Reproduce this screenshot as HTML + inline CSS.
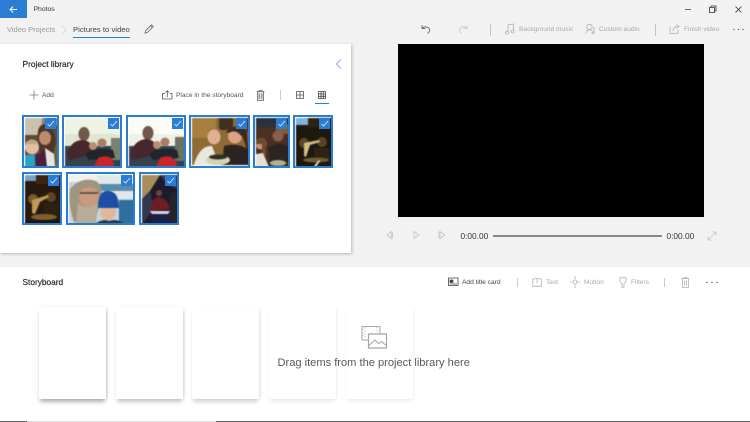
<!DOCTYPE html>
<html lang="en">
<head>
<meta charset="utf-8">
<title>Photos</title>
<style>
html,body{margin:0;padding:0}
body{width:750px;height:422px;overflow:hidden;background:#f2f2f2;position:relative;font-family:"Liberation Sans",sans-serif;color:#222}
.a{position:absolute;white-space:nowrap}
.t{font-size:6.6px;line-height:10px;margin-top:.7px}
.g{color:#a8a8a8}
svg{position:absolute;overflow:visible;stroke-width:.8}
.thumb{position:absolute;border:2px solid #2b7cd3;box-sizing:border-box;background:#fff;overflow:hidden}
.thumb>svg{left:1px;top:1px;filter:blur(.6px)}
.chk{position:absolute;top:1px;right:1px;width:11px;height:11px;background:#2b7cd3}
.chk svg{left:0;top:0}
.card{position:absolute;top:307px;width:67px;height:91.500px;background:#fff}
</style>
</head>
<body>
<!-- title bar -->
<div class="a" style="left:0;top:0;width:27px;height:18px;background:#2b7cd3"></div>
<svg style="left:0;top:0" width="27" height="18"><path d="M10 9.500H17M13 6.500L10 9.500L13 12.500" fill="none" stroke="#fff" stroke-width="1"/></svg>
<div class="a" style="left:33.500px;top:5px;font-size:6.800px;line-height:10px;color:#333">Photos</div>
<svg style="left:680px;top:0" width="70" height="18"><path d="M5 9.500H11" stroke="#444" fill="none"/><path d="M29.500 7.500H34.500V12.500H29.500ZM31 7.500V6H36V11H34.500" stroke="#333" fill="none"/><path d="M55.500 6.500L61.500 12.500M61.500 6.500L55.500 12.500" stroke="#333" fill="none"/></svg>

<!-- breadcrumbs -->
<div class="a" style="left:7px;top:24px;font-size:7.500px;line-height:11px;color:#999">Video Projects</div>
<svg style="left:60px;top:24px" width="8" height="12"><path d="M2 1.500L6 6L2 10.500" stroke="#d4d4d4" fill="none"/></svg>
<div class="a" style="left:73px;top:24px;font-size:7.700px;line-height:11px;color:#444">Pictures to video</div>
<div class="a" style="left:73px;top:36.500px;width:57px;height:1px;background:#2b7cd3"></div>
<svg style="left:143px;top:23px" width="12" height="12"><path d="M2 10L2.800 7.500L8.500 1.800L10.300 3.600L4.600 9.300ZM7.500 2.800L9.300 4.600" stroke="#666" fill="none"/></svg>

<!-- top right toolbar -->
<svg style="left:420px;top:23px" width="12" height="12"><path d="M2 2V5.500H5.500M2.300 5.200C4 3.500 7 3.300 8.700 5C10.300 6.700 9.500 9.300 7.500 10.500" stroke="#555" fill="none"/></svg>
<svg style="left:456.500px;top:23px" width="12" height="12"><path d="M10 2V5.500H6.500M9.700 5.200C8 3.500 5 3.300 3.300 5C1.700 6.700 2.500 9.300 4.500 10.500" stroke="#c4c4c4" fill="none"/></svg>
<div class="a" style="left:490px;top:24px;width:1px;height:12px;background:#c4c4c4"></div>
<svg style="left:505px;top:23px" width="10" height="12"><path d="M3 9V2L8.500 1V8" stroke="#b0b0b0" fill="none"/><circle cx="2" cy="9.500" r="1.500" fill="none" stroke="#b0b0b0"/><circle cx="7.500" cy="8.500" r="1.500" fill="none" stroke="#b0b0b0"/></svg>
<div class="a t g" style="left:519px;top:24px">Background music</div>
<svg style="left:585px;top:23px" width="12" height="12"><circle cx="4.500" cy="4" r="2.700" fill="none" stroke="#b0b0b0"/><path d="M.800 10.500C1.300 7.500 3 6.800 4.500 6.800C5.500 6.800 6.300 7 7 7.500M9 4V9.500" stroke="#b0b0b0" fill="none"/><circle cx="8" cy="9.800" r="1" fill="none" stroke="#b0b0b0"/></svg>
<div class="a t g" style="left:599px;top:24px">Custom audio</div>
<div class="a" style="left:655px;top:24px;width:1px;height:12px;background:#c4c4c4"></div>
<svg style="left:669px;top:23px" width="12" height="12"><path d="M1 4V10.500H9V7M4 8C4 5 6 3.500 9 3.500M7.500 1.500L10 3.500L7.500 5.500" stroke="#b0b0b0" fill="none"/></svg>
<div class="a t g" style="left:684px;top:24px">Finish video</div>
<svg style="left:733px;top:28px" width="12" height="3"><circle cx="1" cy="1.500" r=".7" fill="#666"/><circle cx="5.500" cy="1.500" r=".7" fill="#666"/><circle cx="10" cy="1.500" r=".7" fill="#666"/></svg>

<!-- project library panel -->
<div class="a" style="left:0;top:44px;width:351px;height:209px;background:#fff;box-shadow:1px 1px 3px rgba(0,0,0,.25)"></div>
<div class="a" style="left:22.500px;top:59px;font-size:8.400px;line-height:11px;color:#222;-webkit-text-stroke:.15px #222">Project library</div>
<svg style="left:335px;top:58px" width="8" height="12"><path d="M6 1.500L1.500 6L6 10.500" stroke="#5a9bdc" fill="none"/></svg>
<svg style="left:29px;top:90px" width="10" height="10"><path d="M5 .500V9.500M.500 5H9.500" stroke="#777" fill="none"/></svg>
<div class="a t" style="left:42px;top:90px;color:#555">Add</div>
<svg style="left:162px;top:90px" width="11" height="10"><path d="M3 3.500H.500V9H10V3.500H7.500M5.300 7V.800M3.500 2.500L5.300 .800L7 2.500" stroke="#555" fill="none"/></svg>
<div class="a t" style="left:176px;top:90px;color:#555">Place in the storyboard</div>
<svg style="left:256px;top:90px" width="9" height="11"><path d="M.500 1.500H8.500M3 1.500V.500H6V1.500M1.500 1.500V10.500H7.500V1.500" stroke="#666" fill="#e4e4e4"/><path d="M3.200 3.500V8.800M5.800 3.500V8.800" stroke="#666"/></svg>
<div class="a" style="left:280px;top:90px;width:1px;height:10px;background:#c8c8c8"></div>
<svg style="left:296px;top:91px" width="8" height="8"><path d="M.500 .500H7.500V7.500H.500ZM4 .500V7.500M.500 4H7.500" stroke="#555" fill="none"/></svg>
<svg style="left:318px;top:91px" width="8" height="8"><path d="M.500 .500H7.500V7.500H.500ZM3 .500V7.500M5.300 .500V7.500M.500 3H7.500M.500 5.300H7.500" stroke="#444" fill="none"/></svg>
<div class="a" style="left:315px;top:102.500px;width:14px;height:1px;background:#2b7cd3"></div>

<!-- thumbs row 1 -->
<div class="thumb" style="left:22px;top:115px;width:37px;height:53px">
<svg width="33" height="49"><rect width="33" height="49" fill="#5c4c3c"/><rect width="17" height="17" fill="#c9c2ae"/><rect x="17" width="16" height="8" fill="#8a8070"/><rect x="27" y="24" width="6" height="25" fill="#6d5d32"/><path d="M13 24Q11 6 20 6Q29 6 31 26L27 38L15 34Z" fill="#4e3626"/><ellipse cx="20" cy="20" rx="6" ry="7" fill="#c08a6e"/><ellipse cx="7" cy="29" rx="7" ry="7.500" fill="#dfbfa8"/><path d="M0 25Q6 19 13 24L12 26H1Z" fill="#bda87e"/><rect x="0" y="37" width="10" height="12" fill="#2aa3c9"/><path d="M10 38L20 32L22 49H11Z" fill="#4a1f3c"/><path d="M20 30L29 36L30 49H22Z" fill="#e8e4dc"/></svg>
<div class="chk"><svg width="11" height="11"><path d="M2.500 6L4.500 8L9 3" stroke="#e6f0fa" fill="none"/></svg></div></div>

<div class="thumb" style="left:62px;top:115px;width:60px;height:53px">
<svg width="56" height="49"><rect width="56" height="49" fill="#dfe6d2"/><rect y="0" width="56" height="16" fill="#eef3e4"/><rect x="0" y="28" width="56" height="21" fill="#33424c"/><rect x="46" y="20" width="10" height="22" fill="#7c806e"/><ellipse cx="19" cy="16" rx="5.500" ry="7" fill="#705848"/><path d="M2 36Q6 22 18 22Q28 23 30 36L4 42Z" fill="#47262e"/><circle cx="37" cy="25" r="4.500" fill="#a77c68"/><circle cx="28" cy="28" r="4" fill="#b79078"/><path d="M20 36Q32 28 48 32L50 40L24 42Z" fill="#1f252b"/><path d="M29 49L33 40Q42 36 47 41L50 49Z" fill="#c8262a"/></svg>
<div class="chk"><svg width="11" height="11"><path d="M2.500 6L4.500 8L9 3" stroke="#e6f0fa" fill="none"/></svg></div></div>

<div class="thumb" style="left:126px;top:115px;width:60px;height:53px">
<svg width="56" height="49"><rect width="56" height="49" fill="#eef2e4"/><rect y="0" width="56" height="16" fill="#fbfcf6"/><rect x="0" y="28" width="56" height="21" fill="#33424c"/><rect x="46" y="19" width="10" height="24" fill="#6e7262"/><ellipse cx="19" cy="15" rx="5.500" ry="7" fill="#705848"/><path d="M1 36Q6 21 18 21Q28 22 30 36L3 42Z" fill="#47262e"/><circle cx="36" cy="24" r="4.500" fill="#a77c68"/><circle cx="28" cy="27" r="4" fill="#b79078"/><path d="M20 36Q32 28 48 32L50 40L24 42Z" fill="#1f252b"/><path d="M27 49L31 40Q40 36 45 41L49 49Z" fill="#c8262a"/></svg>
<div class="chk"><svg width="11" height="11"><path d="M2.500 6L4.500 8L9 3" stroke="#e6f0fa" fill="none"/></svg></div></div>

<div class="thumb" style="left:189px;top:115px;width:61px;height:53px">
<svg width="57" height="49"><rect width="57" height="49" fill="#8e6a34"/><rect x="0" width="24" height="20" fill="#a8803e"/><rect x="27" width="14" height="12" fill="#403020"/><rect x="45" width="12" height="14" fill="#5a3a22"/><ellipse cx="22" cy="19" rx="6.500" ry="7.500" fill="#e0b090"/><path d="M14 15Q22 7 30 15L29 12Q22 8 15 12Z" fill="#a07850"/><path d="M2 46Q8 27 20 28L28 49H2Z" fill="#e8e8e0"/><ellipse cx="43" cy="18" rx="7" ry="7.500" fill="#d9a488"/><path d="M34 14Q44 3 55 14L57 38L51 20Q44 10 37 15Z" fill="#3f2a1e"/><path d="M32 28Q46 24 57 32V47H30Z" fill="#2b2420"/><ellipse cx="26" cy="42" rx="12" ry="5" fill="#cfd6b0"/><ellipse cx="26" cy="39" rx="9" ry="2.500" fill="#2f3220"/><rect x="0" y="47" width="57" height="2" fill="#f4f2ec"/></svg>
<div class="chk"><svg width="11" height="11"><path d="M2.500 6L4.500 8L9 3" stroke="#e6f0fa" fill="none"/></svg></div></div>

<div class="thumb" style="left:253px;top:115px;width:37px;height:53px">
<svg width="33" height="49"><rect width="33" height="49" fill="#4a2f22"/><rect width="33" height="9" fill="#2a3040"/><rect x="20" y="6" width="13" height="10" fill="#8a5a28"/><circle cx="22" cy="18" r="5.500" fill="#8a5e4a"/><path d="M12 30Q22 22 33 29V44H14Z" fill="#2a2422"/><circle cx="5" cy="26" r="5.500" fill="#c89070"/><path d="M0 22Q6 17 10 22V38H6V26H0Z" fill="#6b4a30"/><path d="M0 36L7 35L13 49H0Z" fill="#e6e0d8"/><ellipse cx="22" cy="45" rx="8" ry="3" fill="#aeb48c"/></svg>
<div class="chk"><svg width="11" height="11"><path d="M2.500 6L4.500 8L9 3" stroke="#e6f0fa" fill="none"/></svg></div></div>

<div class="thumb" style="left:293px;top:115px;width:40px;height:53px">
<svg width="36" height="49"><rect width="36" height="49" fill="#1e180e"/><rect width="12" height="7" fill="#86b0dc"/><rect x="12" width="24" height="9" fill="#2e2410"/><circle cx="8" cy="25" r="5" fill="#5e4628"/><circle cx="26" cy="24" r="5" fill="#5a4424"/><path d="M8 25L23 22L24 24L14 27L10 39L8 38Z" fill="#d2bc80"/><path d="M18 30H33V41H18Z" fill="#2e2412"/><ellipse cx="20" cy="42" rx="13" ry="2.500" fill="#6c5e30"/><path d="M18 48L23 42L24 43L20 49Z" fill="#e8e4d0"/></svg>
<div class="chk"><svg width="11" height="11"><path d="M2.500 6L4.500 8L9 3" stroke="#e6f0fa" fill="none"/></svg></div></div>

<!-- thumbs row 2 -->
<div class="thumb" style="left:22px;top:172px;width:40px;height:53px">
<svg width="36" height="49"><rect width="36" height="49" fill="#261a0e"/><rect width="11" height="6" fill="#7aa0c8"/><rect x="11" width="25" height="9" fill="#3a2610"/><circle cx="8" cy="24" r="5" fill="#7a5830"/><circle cx="26" cy="22" r="5" fill="#5e4424"/><path d="M7 25L23 20L24 22L15 27L10 39L7 38Z" fill="#c09a54"/><path d="M19 28H33V40H19Z" fill="#2e2010"/><ellipse cx="19" cy="42" rx="13" ry="3" fill="#7c6030"/><rect x="0" y="45" width="36" height="4" fill="#1e1408"/></svg>
<div class="chk"><svg width="11" height="11"><path d="M2.500 6L4.500 8L9 3" stroke="#e6f0fa" fill="none"/></svg></div></div>

<div class="thumb" style="left:66px;top:172px;width:69px;height:53px">
<svg width="65" height="49"><rect width="65" height="49" fill="#c6d4dc"/><rect width="30" height="7" fill="#eef2ea"/><rect x="28" y="0" width="37" height="24" fill="#dfe9ea"/><rect x="30" y="9" width="35" height="7" fill="#5a8cb0"/><rect x="50" y="25" width="15" height="24" fill="#2e6f9e"/><path d="M1 14Q12 1 27 6Q36 12 31 28L26 47H5Q-1 30 1 14Z" fill="#a0957f"/><ellipse cx="20" cy="22" rx="10" ry="10" fill="#c99a80"/><path d="M11 18H29" stroke="#444" stroke-width="1.400"/><path d="M9 28Q19 36 29 28L27 49H7Z" fill="#b8ac98"/><circle cx="39" cy="37" r="8" fill="#e2b89c"/><path d="M29 33Q29 15 39 16Q50 16 50 33Z" fill="#1d4fa5"/><path d="M26 49Q34 43 40 46Q48 43 56 49Z" fill="#2c3a38"/></svg>
<div class="chk"><svg width="11" height="11"><path d="M2.500 6L4.500 8L9 3" stroke="#e6f0fa" fill="none"/></svg></div></div>

<div class="thumb" style="left:139px;top:172px;width:40px;height:53px">
<svg width="36" height="49"><rect width="36" height="49" fill="#1e1c2a"/><path d="M0 0H18L8 16L0 24Z" fill="#a88e5c"/><path d="M0 24L8 16L12 34L0 49Z" fill="#34364e"/><path d="M18 0H36V14L26 10Z" fill="#3a4058"/><circle cx="17" cy="18" r="3" fill="#6a4640"/><path d="M8 36Q10 21 17 22Q25 23 28 34Z" fill="#6e1c26"/><path d="M8 36H28L26 39H10Z" fill="#d8d6d8"/><path d="M10 39H28V49H10Z" fill="#1a2244"/><rect x="28" y="18" width="8" height="31" fill="#26242a"/></svg>
<div class="chk"><svg width="11" height="11"><path d="M2.500 6L4.500 8L9 3" stroke="#e6f0fa" fill="none"/></svg></div></div>

<!-- video preview -->
<div class="a" style="left:398px;top:44px;width:306px;height:173px;background:#000"></div>
<svg style="left:385px;top:230px" width="62" height="10"><path d="M6.500 1.500V8.500L2 5ZM7.500 1.500V8.500" stroke="#c4c4c4" fill="none"/><path d="M29 1.500V8.500L34 5Z" stroke="#c4c4c4" fill="none"/><path d="M55 1.500V8.500L60 5ZM54 1.500V8.500" stroke="#c4c4c4" fill="none"/></svg>
<div class="a" style="left:460.500px;top:230.500px;font-size:8.300px;line-height:11px;color:#333">0:00.00</div>
<div class="a" style="left:493px;top:234.500px;width:169px;height:2px;background:#888"></div>
<div class="a" style="left:666.500px;top:230.500px;font-size:8.300px;line-height:11px;color:#333">0:00.00</div>
<svg style="left:707px;top:231px" width="10" height="10"><path d="M1 9L9 1M5.500 1H9V4.500M1 5.500V9H4.500" stroke="#c4c4c4" fill="none"/></svg>

<!-- storyboard -->
<div class="a" style="left:0;top:267px;width:750px;height:155px;background:#fff"></div>
<div class="a" style="left:22.500px;top:277px;font-size:8.300px;line-height:11px;color:#222;-webkit-text-stroke:.15px #222">Storyboard</div>

<svg style="left:448px;top:277px" width="11" height="10"><path d="M.500 1H10V8.500H.500Z" fill="none" stroke="#444"/><path d="M2 3H5V5.500H2ZM2 7H9" stroke="#444" fill="#444" stroke-width=".7"/></svg>
<div class="a t" style="left:462px;top:277px;color:#444">Add title card</div>
<div class="a" style="left:517px;top:278px;width:1px;height:9px;background:#c8c8c8"></div>
<svg style="left:532px;top:277px" width="10" height="10"><path d="M3 2H.800V9.300H9.300V2H7M3 1.500H7M5 1.500V6" stroke="#b0b0b0" fill="none"/></svg>
<div class="a t g" style="left:546px;top:277px">Text</div>
<svg style="left:570px;top:276px" width="10" height="12"><circle cx="5" cy="6" r="2" fill="none" stroke="#b0b0b0"/><path d="M5 0V3M5 9V12M0 6H2.500M7.500 6H10" stroke="#b0b0b0" fill="none"/></svg>
<div class="a t g" style="left:584px;top:277px">Motion</div>
<svg style="left:619px;top:277px" width="8" height="11"><path d="M1 .800H7V4.500L5 6.500V10L3 10.500V6.500L1 4.500Z" stroke="#b0b0b0" fill="none"/></svg>
<div class="a t g" style="left:631px;top:277px">Filters</div>
<div class="a" style="left:664px;top:278px;width:1px;height:9px;background:#c8c8c8"></div>
<svg style="left:681px;top:277px" width="9" height="11"><path d="M.500 1.500H8.500M3 1.500V.500H6V1.500M1.500 1.500V10.300H7.500V1.500M3.500 3.500V8.500M5.500 3.500V8.500" stroke="#b0b0b0" fill="none"/></svg>
<svg style="left:706px;top:281px" width="12" height="3"><circle cx="1" cy="1.500" r=".7" fill="#555"/><circle cx="6" cy="1.500" r=".7" fill="#555"/><circle cx="11" cy="1.500" r=".7" fill="#555"/></svg>

<div class="card" style="left:38.500px;box-shadow:0 4px 4px -1px rgba(0,0,0,.3),2px 0 3px -1px rgba(0,0,0,.16)"></div>
<div class="card" style="left:115.500px;box-shadow:0 4px 4px -1px rgba(0,0,0,.22),2px 0 3px -1px rgba(0,0,0,.12)"></div>
<div class="card" style="left:192px;box-shadow:0 4px 4px -1px rgba(0,0,0,.17),2px 0 3px -1px rgba(0,0,0,.09)"></div>
<div class="card" style="left:269px;box-shadow:0 3px 4px -1px rgba(0,0,0,.1),2px 0 3px -1px rgba(0,0,0,.05)"></div>
<div class="card" style="left:346px;box-shadow:0 3px 4px -1px rgba(0,0,0,.07),2px 0 3px -1px rgba(0,0,0,.04)"></div>

<svg style="left:361px;top:325px" width="26" height="24"><path d="M1 1.500H19V15H1Z" fill="#fff" stroke="#aaa" stroke-width="1"/><path d="M4 2V15M16 2V8M1 4.500H4M1 7.500H4M1 10.500H4" stroke="#b4b4b4" stroke-dasharray="1.500 1.500" fill="none"/><path d="M7.500 9H25.500V23H7.500Z" fill="#fff" stroke="#a4a4a4" stroke-width="1.200"/><path d="M8 20.500L14 15L18 18.500L20.500 16.500L25 20.500" stroke="#a4a4a4" fill="none" stroke-width="1"/></svg>
<div class="a" style="left:277.500px;top:356px;font-size:11.100px;line-height:14px;color:#595959">Drag items from the project library here</div>

<!-- taskbar sliver -->
<div class="a" style="left:0;top:420.500px;width:27px;height:1.500px;background:#666"></div>
<div class="a" style="left:27px;top:420.500px;width:189px;height:1.500px;background:#ddd"></div>
<div class="a" style="left:216px;top:420.500px;width:534px;height:1.500px;background:#666"></div>
</body>
</html>
